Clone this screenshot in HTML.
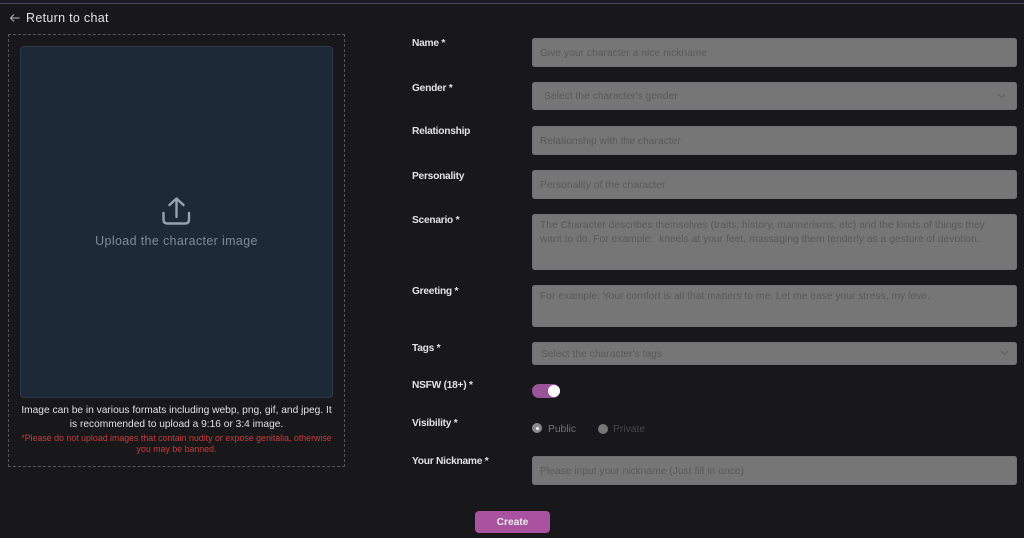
<!DOCTYPE html>
<html><head><meta charset="utf-8"><style>
html,body{margin:0;padding:0;width:1024px;height:538px;overflow:hidden;background:#18181a;font-family:"Liberation Sans",sans-serif}
.a{position:absolute;white-space:nowrap}
.l{position:absolute;left:412px;color:#e2e2e2;font-size:10.2px;line-height:12px;font-weight:bold;white-space:nowrap;letter-spacing:-.25px}
.f{position:absolute;left:532px;width:485px;background:#767676;border-radius:3px;box-shadow:inset 0 0 0 1px #707072}
.p{position:absolute;left:540px;color:#59595b;font-size:10.2px;line-height:14px;white-space:nowrap;letter-spacing:.05px}
</style></head><body>
<div class="a" style="left:0;top:3px;width:1024px;height:1px;background:#4a4560"></div>
<div class="a" style="left:0;top:0;width:1024px;height:3px;background:#1c1a22"></div>
<svg class="a" style="left:9px;top:12px" width="12" height="12" viewBox="0 0 12 12" fill="none" stroke="#b8b8b8" stroke-width="1"><path d="M10.500 6H1.500M5 2.500L1.500 6L5 9.500"/></svg>
<div class="a" style="left:26px;top:11px;color:#e4e4e4;font-size:12.5px;line-height:15px;letter-spacing:.3px">Return to chat</div>

<div class="a" style="left:8px;top:34px;width:335px;height:431px;border:1px dashed #565656"></div>
<div class="a" style="left:20px;top:46px;width:313px;height:352px;background:#1e2938;border:1px solid #2f3a49;border-radius:4px;box-sizing:border-box"></div>
<svg class="a" style="left:161px;top:196px" width="30" height="30" viewBox="0 0 30 30" fill="none" stroke="#98a2ae" stroke-width="2.400" stroke-linecap="round" stroke-linejoin="round"><path d="M2.500 17V23.500Q2.500 27.500 6.500 27.500H24Q28 27.500 28 23.500V17"/><path d="M15.500 21V2.500M8.500 9L15.500 2.500L22.500 9"/></svg>
<div class="a" style="left:20px;width:313px;top:233px;text-align:center;color:#7f8997;font-size:12.5px;line-height:16px;letter-spacing:.35px">Upload the character image</div>
<div class="a" style="left:9px;width:335px;top:404px;text-align:center;color:#e2e2e2;font-size:10.2px;line-height:14px;letter-spacing:0">Image can be in various formats including webp, png, gif, and jpeg. It<br>is recommended to upload a 9:16 or 3:4 image.</div>
<div class="a" style="left:9px;width:335px;top:433px;text-align:center;color:#c93a3c;font-size:8.8px;line-height:11px;letter-spacing:.01px">*Please do not upload images that contain nudity or expose genitalia, otherwise<br>you may be banned.</div>

<div class="l" style="top:38px">Name *</div>
<div class="f" style="top:38px;height:29px"></div>
<div class="p" style="top:47px">Give your character a nice nickname</div>

<div class="l" style="top:83px">Gender *</div>
<div class="f" style="top:82px;height:28px"></div>
<div class="p" style="top:90px;left:544px">Select the character's gender</div>
<svg class="a" style="left:997px;top:92px" width="9" height="8" viewBox="0 0 9 8" fill="none" stroke="#5e5e60" stroke-width="1"><path d="M1 2L4.500 5.500L8 2"/></svg>

<div class="l" style="top:126px">Relationship</div>
<div class="f" style="top:126px;height:29px"></div>
<div class="p" style="top:135px">Relationship with the character</div>

<div class="l" style="top:171px">Personality</div>
<div class="f" style="top:170px;height:29px"></div>
<div class="p" style="top:179px">Personality of the character</div>

<div class="l" style="top:215px">Scenario *</div>
<div class="f" style="top:214px;height:56px"></div>
<div class="p" style="top:219px">The Character describes themselves (traits, history, mannerisms, etc) and the kinds of things they</div>
<div class="p" style="top:233px">want to do. For example:&nbsp; kneels at your feet, massaging them tenderly as a gesture of devotion.</div>

<div class="l" style="top:286px">Greeting *</div>
<div class="f" style="top:285px;height:42px"></div>
<div class="p" style="top:290px">For example: Your comfort is all that matters to me. Let me ease your stress, my love.</div>

<div class="l" style="top:343px">Tags *</div>
<div class="f" style="top:342px;height:23px"></div>
<div class="p" style="top:348px;left:541px">Select the character's tags</div>
<svg class="a" style="left:1000px;top:349px" width="9" height="8" viewBox="0 0 9 8" fill="none" stroke="#5e5e60" stroke-width="1"><path d="M1 2L4.500 5.500L8 2"/></svg>

<div class="l" style="top:380px">NSFW (18+) *</div>
<div class="a" style="left:532px;top:384px;width:28px;height:14px;border-radius:7px;background:#9a5499"></div>
<div class="a" style="left:547.500px;top:385px;width:12px;height:12px;border-radius:6px;background:#fff"></div>

<div class="l" style="top:418px">Visibility *</div>
<div class="a" style="left:532px;top:423px;width:10px;height:10px;border-radius:5px;background:#8a8a8a"></div>
<div class="a" style="left:535.500px;top:426.500px;width:3px;height:3px;border-radius:2px;background:#f0f0f0"></div>
<div class="a" style="left:548px;top:423px;color:#747476;font-size:10.2px;line-height:14px;letter-spacing:.05px">Public</div>
<div class="a" style="left:598px;top:424px;width:10px;height:10px;border-radius:5px;background:#767676"></div>
<div class="a" style="left:613px;top:423px;color:#474749;font-size:10.2px;line-height:14px;letter-spacing:.05px">Private</div>

<div class="l" style="top:456px">Your Nickname *</div>
<div class="f" style="top:456px;height:29px"></div>
<div class="p" style="top:465px">Please input your nickname (Just fill in once)</div>

<div class="a" style="left:475px;top:511px;width:75px;height:22px;border-radius:4px;background:#a9529f;color:#ececec;font-size:10.2px;font-weight:bold;line-height:23px;text-align:center">Create</div>
</body></html>
